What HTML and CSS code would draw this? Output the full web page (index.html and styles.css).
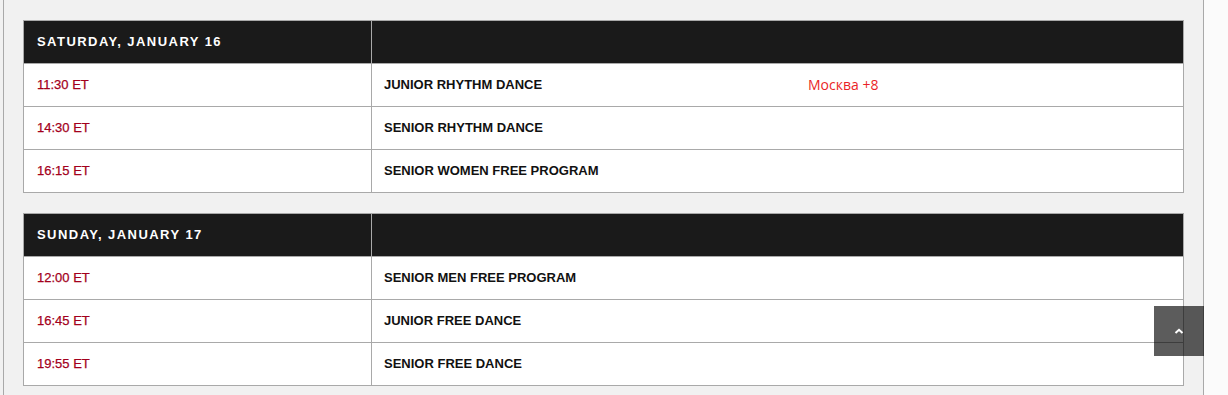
FILE: index.html
```html
<!DOCTYPE html>
<html lang="en">
<head>
<meta charset="utf-8">
<title>Schedule</title>
<link rel="stylesheet" href="styles.css">
</head>
<body>
<main class="page">
  <section class="day">
    <div class="cell head">SATURDAY, JANUARY 16</div>
    <div class="cell head"></div>
    <div class="cell time">11:30 ET</div>
    <div class="cell event"><span class="name">JUNIOR RHYTHM DANCE</span><span class="tz">Москва +8</span></div>
    <div class="cell time">14:30 ET</div>
    <div class="cell event"><span class="name">SENIOR RHYTHM DANCE</span></div>
    <div class="cell time">16:15 ET</div>
    <div class="cell event"><span class="name">SENIOR WOMEN FREE PROGRAM</span></div>
  </section>
  <section class="day">
    <div class="cell head">SUNDAY, JANUARY 17</div>
    <div class="cell head"></div>
    <div class="cell time">12:00 ET</div>
    <div class="cell event"><span class="name">SENIOR MEN FREE PROGRAM</span></div>
    <div class="cell time">16:45 ET</div>
    <div class="cell event"><span class="name">JUNIOR FREE DANCE</span></div>
    <div class="cell time">19:55 ET</div>
    <div class="cell event"><span class="name">SENIOR FREE DANCE</span></div>
  </section>
</main>
<a class="to-top" href="#" aria-label="Back to top">
  <svg width="10" height="6" viewBox="0 0 10 6" aria-hidden="true"><polyline points="1.5,5 5,1.8 8.5,5" fill="none" stroke="#fff" stroke-width="2"/></svg>
</a>
</body>
</html>
```
FILE: styles.css
```css
html, body {
  margin: 0;
  padding: 0;
}
body {
  height: 395px;
  overflow: hidden;
  background: linear-gradient(to right, #f1f1f1 1204px, #fbfbfb 1204px);
  font-family: "Liberation Sans", Arial, sans-serif;
  font-size: 13px;
}
.page {
  box-sizing: border-box;
  margin-left: 3px;
  width: 1201px;
  min-height: 395px;
  padding: 20px 19px;
  background: #f1f1f1;
  border-left: 1px solid #a9a9a9;
  border-right: 1px solid #a9a9a9;
  display: flex;
  flex-direction: column;
  gap: 20px;
}
.day {
  display: grid;
  grid-template-columns: 348px 1fr;
  border-left: 1px solid #a9a9a9;
  border-top: 1px solid #a9a9a9;
  background: #fff;
}
.cell {
  box-sizing: border-box;
  height: 43px;
  padding: 0 12px 2px 13px;
  border-right: 1px solid #a9a9a9;
  border-bottom: 1px solid #a9a9a9;
  display: flex;
  align-items: center;
  white-space: nowrap;
}
.head {
  background: #1a1a1a;
  color: #fff;
  font-weight: bold;
  letter-spacing: 1.45px;
}
.time {
  color: #a3001c;
  -webkit-text-stroke: 0.25px #a3001c;
}
.event {
  padding-left: 12px;
  color: #111;
  font-weight: bold;
}
.name {
  display: inline-block;
  width: 424px;
}
.tz {
  font-family: "Open Sans", "Noto Sans", sans-serif;
  font-weight: normal;
  font-size: 14px;
  color: #ea1f28;
}
.to-top {
  position: fixed;
  left: 1154px;
  top: 306px;
  width: 50px;
  height: 50px;
  background: rgba(0, 0, 0, 0.64);
  display: flex;
  align-items: center;
  justify-content: center;
}
.to-top svg {
  display: block;
  margin-top: -1px;
}
```
